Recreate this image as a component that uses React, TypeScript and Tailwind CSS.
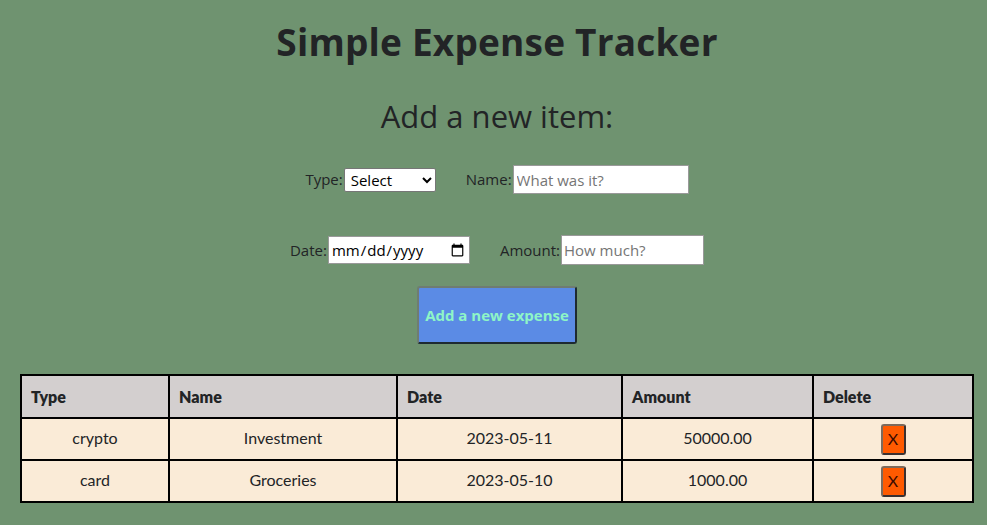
import React from "react";

const rows = [
  { type: "crypto", name: "Investment", date: "2023-05-11", amount: "50000.00" },
  { type: "card", name: "Groceries", date: "2023-05-10", amount: "1000.00" },
];

export default function App() {
  return (
    <div
      className="min-h-[525px] w-full bg-[#6f9370] text-[#222426] flex flex-col items-center pl-[7px]"
      style={{ fontFamily: "'Open Sans', 'DejaVu Sans', sans-serif" }}
    >
      <h1 className="mt-[19px] text-[37px] font-bold leading-[46px] tracking-[0.2px]">Simple Expense Tracker</h1>
      <h2 className="mt-[31px] text-[31px] leading-[40px]">Add a new item:</h2>
      <div className="mt-[29px] flex items-center gap-[30px] text-[15px]">
        <label className="flex items-center gap-[1px]">
          Type:
          <select className="w-[92px] h-[24px] bg-white border border-[#767676] rounded-[2px] text-[15px] text-black px-[2px]">
            <option>Select</option>
          </select>
        </label>
        <label className="flex items-center gap-[1px]">
          Name:
          <input
            placeholder="What was it?"
            className="w-[176px] h-[29px] bg-white border border-[#999] px-[3px] text-[15px] placeholder:text-[#757575]"
          />
        </label>
      </div>
      <div className="mt-[41px] flex items-center gap-[30px] text-[15px]">
        <label className="flex items-center gap-[1px]">
          Date:
          <input
            type="date"
            className="w-[142px] h-[28px] bg-white border border-[#999] px-[2px] text-[15px] text-black"
          />
        </label>
        <label className="flex items-center gap-[1px]">
          Amount:
          <input
            placeholder="How much?"
            className="w-[143px] h-[30px] bg-white border border-[#999] px-[2px] text-[15px] placeholder:text-[#757575]"
          />
        </label>
      </div>
      <button className="mt-[21px] w-[160px] h-[58px] bg-[#5b8be5] text-[#8ef5c7] font-bold text-[15px] rounded-[3px] border-2 border-[#6f7c72] border-r-[#1e2a30] border-b-[#1e2a30]">
        Add a new expense
      </button>
      <table
        className="mt-[30px] w-[952px] border-collapse border-2 border-black text-[16px] table-fixed"
        style={{ fontFamily: "Lato, 'Open Sans', sans-serif" }}
      >
        <colgroup>
          <col className="w-[148px]" />
          <col className="w-[228px]" />
          <col className="w-[225px]" />
          <col className="w-[191px]" />
          <col className="w-[160px]" />
        </colgroup>
        <thead>
          <tr className="bg-[#d3cfcf] h-[43px]">
            {["Type", "Name", "Date", "Amount", "Delete"].map((h) => (
              <th key={h} className="border-2 border-black text-left px-[9px] font-extrabold">
                {h}
              </th>
            ))}
          </tr>
        </thead>
        <tbody>
          {rows.map((r) => (
            <tr key={r.name} className="bg-[#faebd7] h-[42px]">
              <td className="border-2 border-black text-center pb-[3px]">{r.type}</td>
              <td className="border-2 border-black text-center pb-[3px]">{r.name}</td>
              <td className="border-2 border-black text-center pb-[3px]">{r.date}</td>
              <td className="border-2 border-black text-center pb-[3px]">{r.amount}</td>
              <td className="border-2 border-black text-center">
                <button className="w-[25px] h-[31px] bg-[#ff5a00] text-[#3a0a00] text-[16px] rounded-[3px] border-2 border-[#7c6a5c] border-r-[#3a3030] border-b-[#3a3030] leading-none">
                  X
                </button>
              </td>
            </tr>
          ))}
        </tbody>
      </table>
    </div>
  );
}
